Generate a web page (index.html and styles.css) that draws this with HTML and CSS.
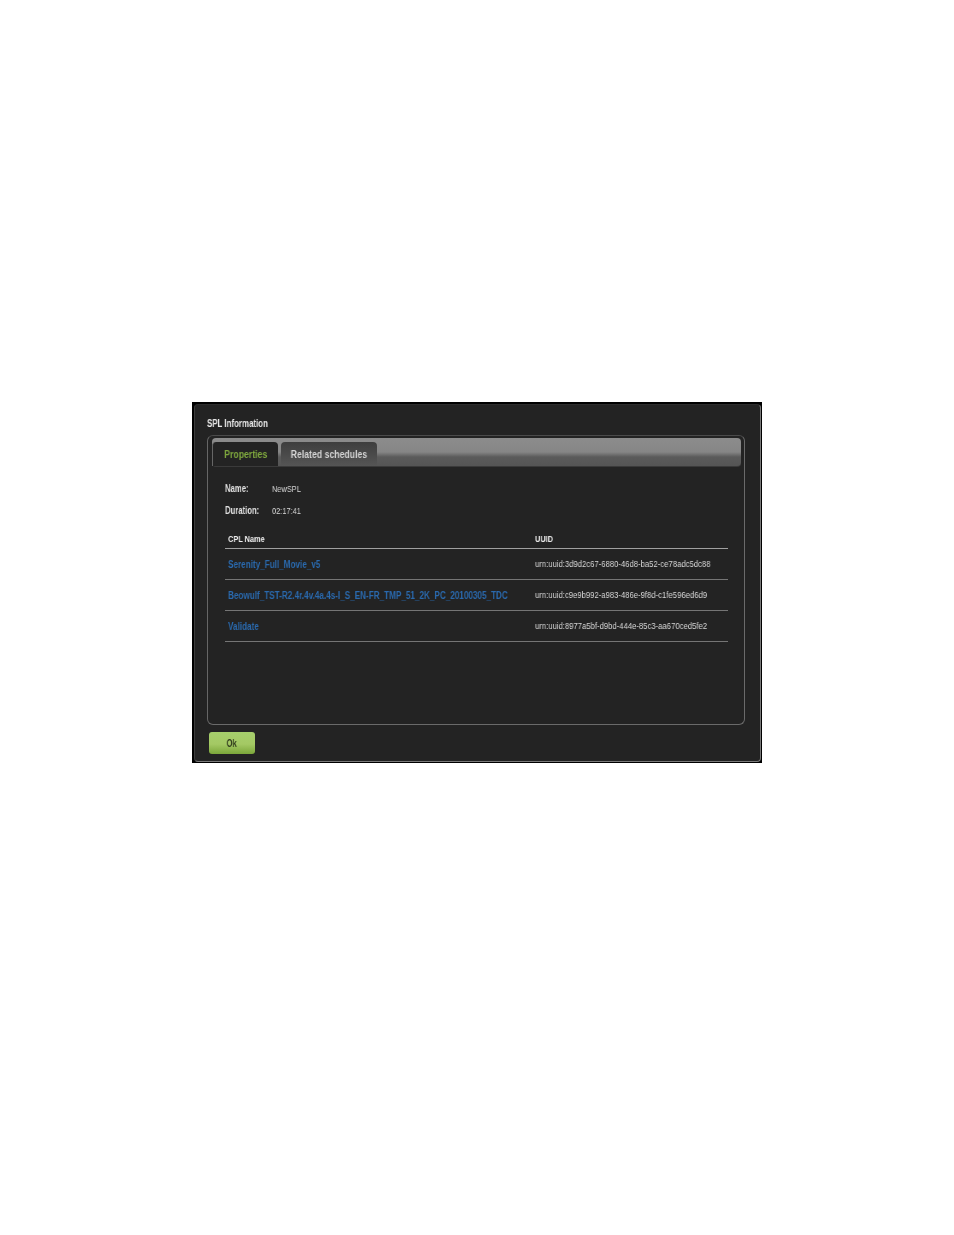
FILE: index.html
```html
<!DOCTYPE html>
<html lang="en">
<head>
<meta charset="utf-8">
<title>SPL Information</title>
<link rel="stylesheet" href="styles.css">
</head>
<body>
<div class="dialog">
  <div class="dialog-inner">
    <h1 class="title">SPL Information</h1>
    <div class="panel">
      <div class="tabbar">
        <div class="tab tab-active"><span class="tab-text">Properties</span></div>
        <div class="tab"><span class="tab-text">Related schedules</span></div>
      </div>
      <div class="props">
        <div class="prop"><span class="prop-label">Name:</span><span class="prop-value">NewSPL</span></div>
        <div class="prop"><span class="prop-label">Duration:</span><span class="prop-value">02:17:41</span></div>
      </div>
      <div class="cpl-table">
        <div class="row row-head"><div class="col-name">CPL Name</div><div class="col-uuid">UUID</div></div>
        <div class="row"><div class="col-name link">Serenity_Full_Movie_v5</div><div class="col-uuid">urn:uuid:3d9d2c67-6880-46d8-ba52-ce78adc5dc88</div></div>
        <div class="row"><div class="col-name link">Beowulf_TST-R2.4r.4v.4a.4s-I_S_EN-FR_TMP_51_2K_PC_20100305_TDC</div><div class="col-uuid">urn:uuid:c9e9b992-a983-486e-9f8d-c1fe596ed6d9</div></div>
        <div class="row"><div class="col-name link">Validate</div><div class="col-uuid">urn:uuid:8977a5bf-d9bd-444e-85c3-aa670ced5fe2</div></div>
      </div>
    </div>
    <button class="ok" type="button"><span class="ok-text">Ok</span></button>
  </div>
</div>
</body>
</html>
```
FILE: styles.css
```css
* { box-sizing: border-box; }
html, body { margin: 0; background: #fff; }
body { padding: 402px 0 0 192px; height: 1235px; font-family: "Liberation Sans", Arial, sans-serif; color: #e6e6e6; }
.dialog { width: 570px; height: 361px; background: #000; padding: 2px 1px 1px 2px; }
.dialog-inner { height: 100%; background: #232323; border: 1px solid #7a7a7a; border-left-color: #3c3c3c; border-top-color: #2c2c2c; border-radius: 4px; padding: 0 15px 0 12px; }
.title { margin: 0; padding-top: 13px; height: 30px; font-size: 10px; line-height: 12px; font-weight: 700; color: #e8e8e8; transform: scaleX(0.79); transform-origin: left center; will-change: transform; }
.panel { width: 538px; height: 290px; border: 1px solid #6a6a6a; border-top-color: #4a4a4a; border-left-color: #666; border-radius: 6px; padding: 2px 3px 0 4px; }
.tabbar { display: flex; gap: 3px; height: 29px; padding-top: 4px; border-radius: 4px; border-bottom: 1px solid #3a3a3a; background: linear-gradient(#8c8c8c 0, #868686 50%, #5a5a5a 68%, #555 100%); }
.tab { height: 24px; border-radius: 4px 4px 0 0; background: linear-gradient(#3e3e3e, #555); width: 96px; text-align: center; font-size: 10px; line-height: 26px; font-weight: 700; color: #d4d4d4; }
.tab-text { display: inline-block; transform: scaleX(0.87); will-change: transform; }
.tab-active { width: 66px; background: #232323; color: #7fa83e; border-left: 1px solid #666; }
.props { padding: 15px 0 0 13px; height: 67px; }
.prop { display: flex; height: 22px; line-height: 14px; }
.prop-label { width: 47px; flex: none; font-weight: 700; font-size: 10px; color: #e0e0e0; white-space: nowrap; transform: scaleX(0.77); transform-origin: left center; will-change: transform; }
.prop-value { font-size: 9.5px; color: #d8d8d8; transform: scaleX(0.78); transform-origin: left center; will-change: transform; }
.cpl-table { margin-left: 13px; width: 503px; }
.row { display: flex; height: 31px; border-bottom: 1px solid #757575; line-height: 30px; }
.row-head { height: 15px; line-height: 10px; border-bottom-color: #a0a0a0; }
.col-name { width: 307px; flex: none; margin-left: 3px; white-space: nowrap; font-size: 9px; font-weight: 700; color: #f0f0f0; transform: scaleX(0.82); transform-origin: left center; will-change: transform; }
.col-uuid { white-space: nowrap; font-size: 9px; color: #d8d8d8; transform: scaleX(0.855); transform-origin: left center; will-change: transform; }
.row-head .col-uuid { font-weight: 700; color: #e6e6e6; transform: scaleX(0.82); }
.col-name.link { color: #2a69ad; font-size: 10px; line-height: 32px; transform: scaleX(0.815); }
.ok { display: block; margin: 7px 0 0 2px; width: 46px; height: 22px; padding: 0; border: 0; border-radius: 3px; background: linear-gradient(#a6cf6c, #a4c964 55%, #7ba63a); font-family: inherit; font-size: 10px; font-weight: 700; color: #2f3a1c; }
.ok-text { display: inline-block; transform: scaleX(0.75); will-change: transform; }
```
